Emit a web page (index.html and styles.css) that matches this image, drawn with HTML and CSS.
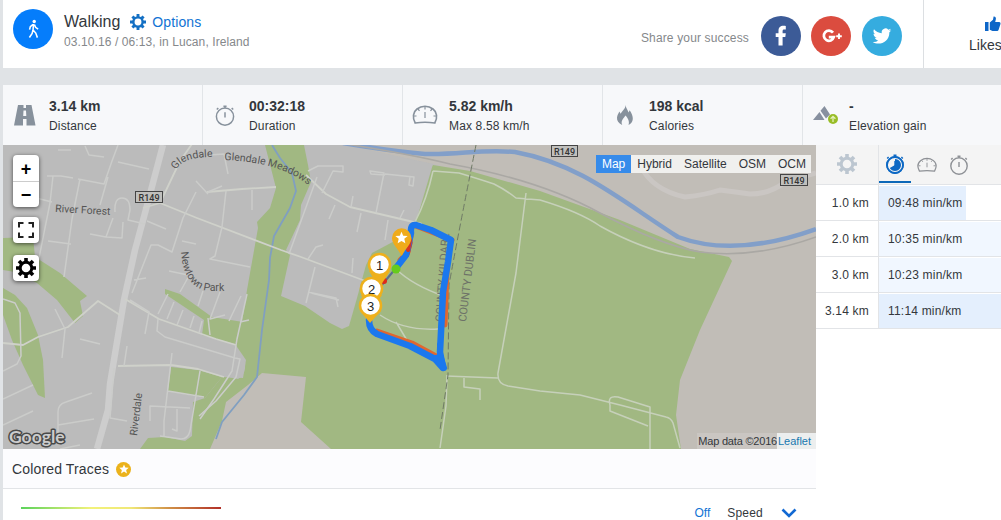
FILE: index.html
```html
<!DOCTYPE html>
<html lang="en">
<head>
    <meta charset="UTF-8">
    <meta name="viewport" content="width=device-width, initial-scale=1.0">
    <title>Walking - Workout</title>
    <link rel="stylesheet" href="styles.css">
</head>
<body>
    <!-- shared icons -->
    <svg width="0" height="0" class="defs">
        <symbol id="gear" viewBox="0 0 20 20">
            <circle cx="10" cy="10" r="5.800" fill="none" stroke="currentColor" stroke-width="3"/>
            <path d="M10 0v4M10 16v4M0 10h4M16 10h4M3 3l2.8 2.8M14.2 14.2L17 17M17 3l-2.8 2.8M5.8 14.2L3 17" stroke="currentColor" stroke-width="3.6"/>
        </symbol>
        <symbol id="watch" viewBox="0 0 20 20">
            <circle cx="10" cy="11" r="8.2" fill="none" stroke="currentColor" stroke-width="1.4"/>
            <path d="M8.5 1.2h3M10 1v2M2.2 4.4l1.4-1.5M17.8 4.4l-1.4-1.5M10 7v5" fill="none" stroke="currentColor" stroke-width="1.4"/>
        </symbol>
        <symbol id="speedo" viewBox="0 0 26 20">
            <path d="M3.2 18C.2 12.5 1 7 5 4c4.600-3.600 11.400-3.600 16 0 4 3 4.800 8.500 1.800 14-6-1-13.600-1-19.600 0z" fill="none" stroke="currentColor" stroke-width="1.600"/>
            <path d="M13 7v6M13 2v2.500M6 4l1.500 1.800M20 4l-1.500 1.800M2 11h2.500M24 11h-2.500" stroke="currentColor" stroke-width="1.200"/>
        </symbol>
        <symbol id="star" viewBox="0 0 20 20">
            <path d="M10 1l2.600 6.200 6.900.5-5.200 4.400 1.600 6.700L10 15.200l-5.900 3.600 1.600-6.700L.5 7.700l6.900-.5z" fill="currentColor"/>
        </symbol>
    </svg>

    <div class="header">
        <div class="sport-icon">
            <svg width="13" height="20" viewBox="0 0 14 22">
                <circle cx="7.800" cy="2.700" r="1.900" fill="#fff"/>
                <path d="M7 5.500L6.500 12l3 3.500 1.800 5M6.300 12.500L5.500 16l-3 4.300M6.500 6L3.500 8.500l-.8 3.200M8 6.200l1.300 3 2.800 2" fill="none" stroke="#fff" stroke-width="1.700"/>
            </svg>
        </div>
        <div class="title">
            <div class="title-row">
                <span class="sport">Walking</span>
                <svg class="options-gear" width="16" height="16"><use href="#gear"/></svg>
                <a class="options">Options</a>
            </div>
            <div class="date">03.10.16 / 06:13, in Lucan, Ireland</div>
        </div>
        <div class="share">
            <span class="share-text">Share your success</span>
            <div class="social facebook">
                <svg width="40" height="40"><path d="M17.500 29.500V21h-2.800v-3.800h2.800v-2.400c0-3.500 1.800-5 5-5 1 0 1.800.1 2.300.2v3.500h-1.600c-1.200 0-1.600.6-1.600 1.700v2h3.200L24.300 21h-2.700v8.500z" fill="#fff"/></svg>
            </div>
            <div class="social google">
                <svg width="40" height="40"><path d="M22 16.600a5.100 5.100 0 1 0 .8 4.600h-5" fill="none" stroke="#fff" stroke-width="2.700"/><path d="M28 17.500v5.600M25.200 20.300h5.600" stroke="#fff" stroke-width="1.900"/></svg>
            </div>
            <div class="social twitter">
                <svg width="40" height="40"><path d="M29.300 14.300c-.7.3-1.400.5-2.200.6.8-.5 1.400-1.200 1.600-2.100-.7.400-1.500.7-2.400.9a3.800 3.800 0 0 0-6.500 3.500c-3.200-.2-6-1.700-7.800-4-1 1.700-.5 3.900 1.200 5.100-.6 0-1.200-.2-1.700-.5 0 1.900 1.300 3.400 3 3.800-.5.200-1.100.2-1.700.1.500 1.500 1.900 2.600 3.500 2.700a7.700 7.700 0 0 1-5.600 1.600c6 3.700 16.700.9 16.700-9.800.8-.5 1.400-1.200 1.900-1.900z" fill="#fff"/></svg>
            </div>
        </div>
        <div class="likes">
            <svg width="16" height="16" viewBox="0 0 16 16"><path d="M0 6h3.500v9H0zM4.800 6.500L8 3.800 8.600.5c1.900-.2 2.700 1.200 2.200 3L10.200 6H14c1.400 0 1.800 1 1.400 2.200l-1.700 5.300c-.3 1-1 1.500-2 1.500H7.500l-2.700-1.200z" fill="#0d66c8"/></svg>
            <span>Likes</span>
        </div>
    </div>

    <div class="stats">
        <div class="stat">
            <svg width="22" height="21" viewBox="0 0 22 21"><path d="M4 0h5.500v3h2.500V0h5.500L21.500 20.500h-9V14H9v6.500H0zM9.500 5.500L9.200 11h3.100L12 5.500z" fill="#87919c" fill-rule="evenodd"/></svg>
            <div><b>3.14 km</b><span>Distance</span></div>
        </div>
        <div class="stat">
            <svg width="21" height="21"><use href="#watch"/></svg>
            <div><b>00:32:18</b><span>Duration</span></div>
        </div>
        <div class="stat">
            <svg width="26" height="20"><use href="#speedo"/></svg>
            <div><b>5.82 km/h</b><span>Max 8.58 km/h</span></div>
        </div>
        <div class="stat">
            <svg width="16" height="21" viewBox="0 0 16 21"><path d="M8.500 0c.3 3 2.200 4.500 3 7.500l1.200-2.300c2 3 3.300 6 3.100 8.800-.2 3-2 5-4.300 6 1.300-3.500-.5-6.500-2.800-9.500-2.500 3-5.200 5.500-3.500 9.500C1.500 18.500-.3 15.500 0 12.500.3 10 1.500 8.500 2.300 6.500l1.400 2.300C5 6 8.500 4 8.500 0z" fill="#87919c"/></svg>
            <div><b>198 kcal</b><span>Calories</span></div>
        </div>
        <div class="stat">
            <svg width="26" height="20" viewBox="-1 -1 26 20"><path d="M0 14L6.500 6l5 8zM7.500 4.800L11.500 0l5.500 8.500-4 4z" fill="#87909f"/><circle cx="20" cy="13" r="5" fill="#98bd27"/><path d="M20 16v-5M17.600 12.800L20 10.400l2.400 2.400" fill="none" stroke="#e3efbb" stroke-width="1.300"/></svg>
            <div><b>-</b><span>Elevation gain</span></div>
        </div>
    </div>

    <div class="main">
        <div class="left">
            <div class="map">
                <svg class="tiles" width="813" height="304" viewBox="3 145 813 304">
                    <!-- land -->
                    <rect x="3" y="145" width="813" height="304" fill="#bbbbbb"/>
                    <path class="field" d="M345 145H816V449H670V250L540 192 433 164z"/>
                    <path class="park" d="M265 145H306L345 240 433 165 470 171 540 191 620 220 690 249 729 257 732 261 700 330 680 380 676 415 681 449H140L148 438 165 437 185 441 192 436 193 402 205 398 222 377 243 378 246 360 235 344 242 322 247 290 258 228 257 222 270 208 276 188z"/>
                    <path class="town" d="M304 145H345L433 164 416 222 404 236 372 253 366 265 357 298 349 326 342 329 330 323 305 306 281 296 290 255 286 250 300 220 301 205 311 182 308 165z"/>
                    <path class="town" d="M222 355l20 3q4 2 3 10t-7 11l-16-3z"/>
                    <path class="field" d="M262 373l44 4-5 45 30 27H210l12-28 4-19 22-17z"/>
                    <path class="park" d="M3 238l30-1 2 20 25 16 27 23-7 5 3 15-8 7-18-23-20-17-22-11-12-2z"/>
                    <path class="park" d="M3 288l12 7 12 13 11 27 5 25 2 38-7-3-15-30-11-25-9-25z"/>
                    <path class="park" d="M165 289l15 5 32 23 31 5-8 22-33-9 2-15-39-26z"/>
                    <path class="park" d="M171 367l27 3 24 7-17 21-37-7z"/>

                    <!-- water -->
                    <path class="stream" d="M272 145l8 13 12 15 4 18-6 17-16 28-4 22-1 22-7 50-5 47-13 18-22 27-6 17"/>
                    <path class="canal" d="M343 143Q390 151 425 154C460 155 480 149 515 152C580 164 620 200 678 237Q735 258 816 229"/>

                    <!-- streets -->
                    <path class="highway" d="M163 145L145 213 135 250 124 300 110 384 108 410 97 449"/>
                    <path class="main-street" d="M143 208l17-5 37 15 84 32 20 7 67 25M160 203l20-42 12-17M207 192l35-3 34-2M306 175l20 19 24 13 72 17M3 343l20 2 15-8 30-10 30-26 22 14M125 299l34 20 57 20 20 6M118 366l53-1 27 4 26 8"/>
                    <path class="street" d="M47 176h14l12 2M53 176l-3 27-12 60M32 197l20 5M80 179l-8 40-8 58M78 179l26 5 8-23 6-16M118 162l31 7M100 205l8-28M85 146l4 9 15 2M58 150h13M48 241l23 3M115 212q-1-14 7-14t8 12l-2 10 17 4M113 218l-7 19 16 1 1-16M106 237l-16-3M147 221l19 8"/>
                    <path class="street" d="M196 192l-13 26-11 34-14-7-7 0-19 48M208 192l14-6M196 181l12 13M226 191l-4 36-7 29-5 3 40 8M182 241l14 3M252 190v20M209 155l15-1 4 20M134 280l12-2M169 271l19 4M180 292l10-18M203 291l-5 15"/>
                    <path class="street" d="M130 300l19 12-4 22M158 319l-1 12 8 6 70 21 5 1-4 18-20 24-17 15M172 353l-8 68v16M114 368l-4 50 17 3M150 421v-15l40 2M177 409v22l-5-2M168 391l36 6M200 371l-10 60q-2 8-9 8l-21-3"/>
                    <path class="street" d="M168 294l-10 20M174 302l-7 17M183 310l-6 15M194 316l-4 12M202 321l-3 12M208 318l2 17M247 294l-10 45-5 32-18 28-14 20M241 296l-12 25M220 292l-10 27 15-4M249 320l-9 2"/>
                    <path class="street" d="M3 299l12 4 5 10 1 43-4 8-14 7M3 399l30-14M3 425l30-14M58 440v-28q0-8 8-10l26-9M58 425l36-6M55 309l10 20-3 29M100 344l-20-5M124 366l3-20M60 449l20-4M138 425v-30"/>
                    <path class="street" d="M308 171l10-5h25v6l-10-1-11 22M335 205l-6 14M351 207l2-11M385 175l-14-1-1-3 14 2-8 40M385 174l29 3-1 9-4-1 1-9M361 213l-4 19M388 220l-3 20M400 218l4-8M323 245l-7 2-8 12M315 267l-9 36M308 292l28 6 2 9M352 273l1-15M289 254l28-77M311 293l28 7"/>
                    <path class="trail" d="M433 171q-6 28-18 51M433 171l26 2q20 6 35 11 12 6 22 14l24 2q40 12 60 26 50 28 95 32M526 193l-10 80-18 100q-1 11 10 13l32 5 40 4 40 10 46 12q5 1 7 6l7 25M446 376l52 2M464 378v9l16 2v11M447 376l-1 30-6 42M396 269q16 16 50 28M380 315q24 16 58 14M396 322l12 20M610 405q-3-10 8-8l32 10v42M610 405v6l38 15"/>

                    <path class="rail" d="M340 143Q410 154 450 164Q540 180 600 213Q660 245 700 252Q755 259 816 237"/>
                    <path d="M640 165q12 25 45 32 20-2 35-7 16 2 30 4 20 0 35-12l31-9" fill="none" stroke="#cac6c3" stroke-width="5"/>
                    <path d="M476 145q-18 90-27 140l-1 90-8 55" fill="none" stroke="#6f7a66" stroke-dasharray="7 3"/>

                    <!-- labels -->
                    <path id="glendale" d="M176 170Q182 157 212 157" fill="none"/>
                    <path id="meadows" d="M224 160Q280 162 308 185" fill="none"/>
                    <path id="newtown" d="M181 252Q184 289 210 291H235" fill="none"/>
                    <g class="label">
                        <text><textPath href="#glendale">Glendale</textPath></text>
                        <text><textPath href="#meadows">Glendale Meadows</textPath></text>
                        <text><textPath href="#newtown">Newtown Park</textPath></text>
                        <text transform="translate(55 212) rotate(3)">River Forest</text>
                        <text transform="translate(137 436) rotate(-83)">Riverdale</text>
                        <text class="county" transform="translate(443 322) rotate(-86)">COUNTY KILDARE</text>
                        <text class="county" transform="translate(466 322) rotate(-83)">COUNTY DUBLIN</text>
                    </g>
                    <g class="shield">
                        <rect x="135.500" y="191.500" width="27" height="11"/><text x="149" y="200.500">R149</text>
                        <rect x="551.500" y="145.500" width="26" height="11"/><text x="564.500" y="154.500">R149</text>
                        <rect x="780.500" y="174.500" width="27" height="11"/><text x="794" y="183.500">R149</text>
                    </g>

                    <!-- workout trace -->
                    <g fill="none" stroke-linecap="round" stroke-linejoin="round">
                        <path d="M413 225l39 15M411 236l-3 16-8 8M447 270l-2 55M377 331l35 12 26 14" stroke="#e0672f" stroke-width="5"/>
                        <path d="M409 243l-3 11" stroke="#d93322" stroke-width="7"/>
                        <path d="M396 268l-20 24" stroke="#5c6e8e" stroke-width="2"/>
                        <path d="M396 268l10-13 5-22q-1-9 5-8l15 5 20 10-3 22-5 30-3 60 3 16-8-9-25-13-33-12q-8-4-8-14" stroke="#1b78ee" stroke-width="6.500"/>
                        <path d="M440 345v10l4 13-8-10" fill="#1b78ee" stroke="#1b78ee" stroke-width="6"/>
                        <path d="M410 240l-2 10" stroke="#d93322" stroke-width="4"/>
                    </g>
                    <circle cx="396" cy="269" r="4.500" fill="#66cc1c"/>
                    <circle cx="384" cy="281" r="3" fill="#dc2a1b"/>

                    <!-- pins -->
                    <path d="M392 238a9.700 9.700 0 1 1 19.400 0c0 6-5 9-9.700 18-4.700-9-9.700-12-9.700-18z" fill="#efab1b"/>
                    <svg x="395" y="231" width="13" height="13" color="#fff"><use href="#star"/></svg>
                    <g class="pin">
                        <path d="M369 271l10 17 11-17z"/><circle cx="379.500" cy="264.500" r="10.500"/><text x="379.500" y="269.500">1</text>
                        <path d="M361 295l10 17 11-17z"/><circle cx="371.500" cy="288.500" r="10.500"/><text x="371.500" y="293.500">2</text>
                        <path d="M360 311l10 12 11-12z"/><circle cx="370.500" cy="305.500" r="10.500"/><text x="370.500" y="310.500">3</text>
                    </g>
                    <text class="google-logo" x="9" y="443">Google</text>
                </svg>

                <div class="controls">
                    <div class="zoom">
                        <span>+</span>
                        <span>−</span>
                    </div>
                    <div class="control">
                        <svg width="16" height="16"><path d="M1 5.500V1h4.500M10.500 1H15v4.500M15 10.500V15h-4.500M5.500 15H1v-4.500" fill="none" stroke="#222" stroke-width="2"/></svg>
                    </div>
                    <div class="control">
                        <svg width="20" height="20"><use href="#gear"/></svg>
                    </div>
                </div>
                <div class="layers">
                    <span class="active">Map</span><span>Hybrid</span><span>Satellite</span><span>OSM</span><span>OCM</span>
                </div>
                <div class="attribution"><span>Map data ©2016</span><a>Leaflet</a></div>
            </div>

            <div class="traces-title">
                <span>Colored Traces</span>
                <div class="badge"><svg width="10" height="10"><use href="#star"/></svg></div>
            </div>
            <div class="traces">
                <div class="gradient"></div>
                <span class="off">Off</span>
                <span class="speed">Speed</span>
                <svg width="16" height="10"><path d="M1.500 1.500L8 8l6.500-6.500" fill="none" stroke="#1269d3" stroke-width="2.600"/></svg>
            </div>
        </div>

        <div class="splits">
            <div class="splits-head">
                <div class="settings"><svg width="20" height="20"><use href="#gear"/></svg></div>
                <div class="tabs">
                    <div class="tab selected">
                        <svg width="20" height="20" viewBox="0 0 20 20"><use href="#watch"/><circle cx="10" cy="11" r="8" fill="none" stroke="#0d68c4" stroke-width="1.800"/><path d="M10 11V5a6 6 0 1 1-5.200 9z" fill="#0d68c4"/></svg>
                    </div>
                    <div class="tab"><svg width="20" height="16"><use href="#speedo"/></svg></div>
                    <div class="tab"><svg width="20" height="20"><use href="#watch"/></svg></div>
                </div>
            </div>
            <div class="split">
                <div class="km">1.0 km</div>
                <div class="pace"><div class="bar strong" style="width: 87px">09:48 min/km</div></div>
            </div>
            <div class="split">
                <div class="km">2.0 km</div>
                <div class="pace"><div class="bar" style="width: 122px">10:35 min/km</div></div>
            </div>
            <div class="split">
                <div class="km">3.0 km</div>
                <div class="pace"><div class="bar" style="width: 122px">10:23 min/km</div></div>
            </div>
            <div class="split">
                <div class="km">3.14 km</div>
                <div class="pace"><div class="bar strong" style="width: 122px">11:14 min/km</div></div>
            </div>
        </div>
    </div>
</body>
</html>
```
FILE: styles.css
```css
* {
    box-sizing: border-box;
}
body {
    margin: 0;
    padding-left: 3px;
    height: 520px;
    overflow: hidden;
    font-family: "Liberation Sans", Arial, sans-serif;
    font-size: 12px;
    color: #33373c;
    background-color: #e0e3e6;
}
svg {
    display: block;
    flex-shrink: 0;
}
.defs {
    position: absolute;
}

/* header */
.header {
    display: flex;
    height: 68px;
    background-color: #ffffff;
}
.sport-icon {
    display: flex;
    align-items: center;
    justify-content: center;
    width: 40px;
    height: 40px;
    margin: 9px 11px 0 10px;
    border-radius: 50%;
    background-color: #057dfb;
}
.title-row {
    display: flex;
    align-items: center;
    height: 20px;
    margin-top: 12px;
}
.sport {
    font-size: 16px;
}
.options-gear {
    margin: 0 6px 0 10px;
    color: #1470c4;
}
.options {
    font-size: 14px;
    letter-spacing: 0.1px;
    color: #1173d4;
}
.date {
    margin-top: 3px;
    letter-spacing: 0.1px;
    color: #85888b;
}
.share {
    display: flex;
    align-items: center;
    gap: 10px;
    margin: 4px 21px 0 auto;
}
.share-text {
    margin-right: 2px;
    margin-top: 4px;
    letter-spacing: 0.15px;
    color: #85888b;
}
.social {
    width: 40px;
    height: 40px;
    border-radius: 50%;
}
.facebook {
    background-color: #3c5b97;
}
.google {
    background-color: #db4c3f;
}
.twitter {
    margin-left: 1px;
    background-color: #35acdf;
}
.likes {
    width: 78px;
    padding: 16px 0 0 45px;
    border-left: 1px solid #dcdfe2;
    font-size: 14px;
    overflow: hidden;
}
.likes svg {
    margin: 0 0 5px 16px;
}

/* stats */
.stats {
    display: flex;
    height: 60px;
    margin-top: 17px;
    background-color: #f7f8fa;
}
.stat {
    display: flex;
    width: 200px;
    padding-top: 13px;
    border-right: 1px solid #e2e5e8;
    flex-shrink: 0;
}
.stat:last-child {
    border-right: none;
}
.stat > svg {
    width: 26px;
    margin: 7px 11px 0 9px;
    color: #87919c;
}
.stat b, .stat span {
    display: block;
}
.stat b {
    font-size: 14px;
    line-height: 16px;
}
.stat span {
    margin-top: 5px;
    line-height: 14px;
    letter-spacing: 0.15px;
}

/* map */
.main {
    display: flex;
    height: 375px;
    background-color: #ffffff;
}
.left {
    width: 813px;
}
.map {
    position: relative;
    height: 304px;
    overflow: hidden;
}
.park {
    fill: #a1b882;
}
.town {
    fill: #bbbbbb;
}
.field {
    fill: #c1bdb7;
}
.stream, .canal, .highway, .main-street, .street, .trail, .rail {
    fill: none;
    stroke-linejoin: round;
}
.stream {
    stroke: #809fc0;
    stroke-width: 1.8;
}
.canal {
    stroke: #829fc9;
    stroke-width: 4.5;
}
.highway {
    stroke: #cdcdcd;
    stroke-width: 6.5;
}
.main-street {
    stroke: #cfd1ca;
    stroke-width: 1.8;
}
.street {
    stroke: #cbccca;
    stroke-width: 1.5;
}
.trail {
    stroke: #c6d0ba;
    stroke-width: 1.5;
}
.rail {
    stroke: #aaa8a4;
    stroke-width: 1.6;
}
.label {
    font-family: Roboto, sans-serif;
    font-size: 10.5px;
    fill: #555555;
}
.label .county {
    font-size: 11px;
    fill: #6d7268;
}
.shield {
    font-family: Roboto, sans-serif;
    font-size: 9px;
    font-weight: 500;
    text-anchor: middle;
    fill: #333333;
}
.shield rect {
    fill: #c0c0bd;
    stroke: #444444;
}
.pin path {
    fill: #eeb01c;
}
.pin circle {
    fill: #ffffff;
    stroke: #eeb01c;
    stroke-width: 2.5;
}
.pin text {
    font-size: 13px;
    text-anchor: middle;
    fill: #222222;
}
.google-logo {
    font-family: Lato, sans-serif;
    font-size: 17.5px;
    font-weight: bold;
    fill: #cccccc;
    stroke: #4a4a4a;
    stroke-width: 3px;
    paint-order: stroke;
    stroke-linejoin: round;
}
.controls {
    position: absolute;
    top: 10px;
    left: 10px;
    display: flex;
    flex-direction: column;
    gap: 10px;
}
.zoom, .control {
    width: 26px;
    border-radius: 4px;
    background-color: #ffffff;
    box-shadow: 0 1px 4px rgba(0, 0, 0, 0.6);
}
.zoom {
    height: 52px;
}
.zoom span {
    display: block;
    height: 26px;
    font-size: 18px;
    font-weight: bold;
    line-height: 28px;
    text-align: center;
    color: #000000;
}
.zoom span + span {
    border-top: 1px solid #cccccc;
    line-height: 26px;
}
.control {
    display: flex;
    align-items: center;
    justify-content: center;
    height: 26px;
    color: #000000;
}
.control + .control {
    margin-top: 2px;
}
.layers {
    position: absolute;
    top: 10px;
    right: 5px;
    display: flex;
    background-color: #f0f0ee;
    line-height: 18px;
}
.layers span {
    padding: 0 6px;
}
.layers span:last-child {
    padding-right: 5px;
}
.layers .active {
    color: #ffffff;
    background-color: #368bea;
}
.attribution {
    position: absolute;
    right: 0;
    bottom: 0;
    display: flex;
    height: 16px;
    font-size: 11px;
    line-height: 16px;
    background-color: rgba(205, 202, 198, 0.7);
}
.attribution span {
    padding-left: 1px;
    letter-spacing: -0.2px;
    white-space: nowrap;
}
.attribution a {
    width: 39px;
    padding-left: 1px;
    color: #1878b0;
    background-color: #eceeee;
}

/* colored traces */
.traces-title {
    display: flex;
    align-items: center;
    height: 40px;
    padding-left: 9px;
    border-bottom: 1px solid #e2e4e7;
    font-size: 14px;
    letter-spacing: 0.15px;
    background-color: #fcfcfe;
}
.badge {
    display: flex;
    align-items: center;
    justify-content: center;
    width: 15px;
    height: 15px;
    margin: 1px 0 0 7px;
    border-radius: 50%;
    color: #ffffff;
    background-color: #ebb21b;
}
.traces {
    display: flex;
    align-items: center;
    height: 48px;
    padding: 0 19px 0 18px;
}
.gradient {
    width: 200px;
    height: 2px;
    margin: -10px auto 0 0;
    background: linear-gradient(to right, #5bd35b, #f2f27a 35%, #f0e878 55%, #cf8d45 75%, #b23028);
}
.off {
    margin-right: 17px;
    color: #1173d4;
}
.speed {
    margin-right: 18px;
    letter-spacing: 0.2px;
}

/* splits */
.splits {
    width: 185px;
}
.splits-head {
    display: flex;
    height: 40px;
    border-bottom: 1px solid #e2e4e7;
    background-color: #f4f4f4;
}
.settings {
    width: 63px;
    padding: 9px 0 0 21px;
    border-right: 1px solid #e2e4e7;
    color: #bcc6d0;
}
.tabs {
    display: flex;
}
.tab {
    display: flex;
    align-items: center;
    justify-content: center;
    width: 32px;
    height: 38px;
    padding-top: 2px;
    color: #8e9196;
}
.tab.selected {
    border-bottom: 2px solid #0d68b8;
    color: #0d68c4;
}
.split {
    display: flex;
    height: 36px;
    border-bottom: 1px solid #e2e4e7;
    line-height: 35px;
    letter-spacing: 0.2px;
}
.km {
    width: 63px;
    padding: 1px 9px 0 0;
    border-right: 1px solid #e2e4e7;
    text-align: right;
}
.bar {
    height: 34px;
    margin-top: 1px;
    padding-left: 9px;
    background-color: #f1f7ff;
}
.bar.strong {
    background-color: #e4effd;
}
```
